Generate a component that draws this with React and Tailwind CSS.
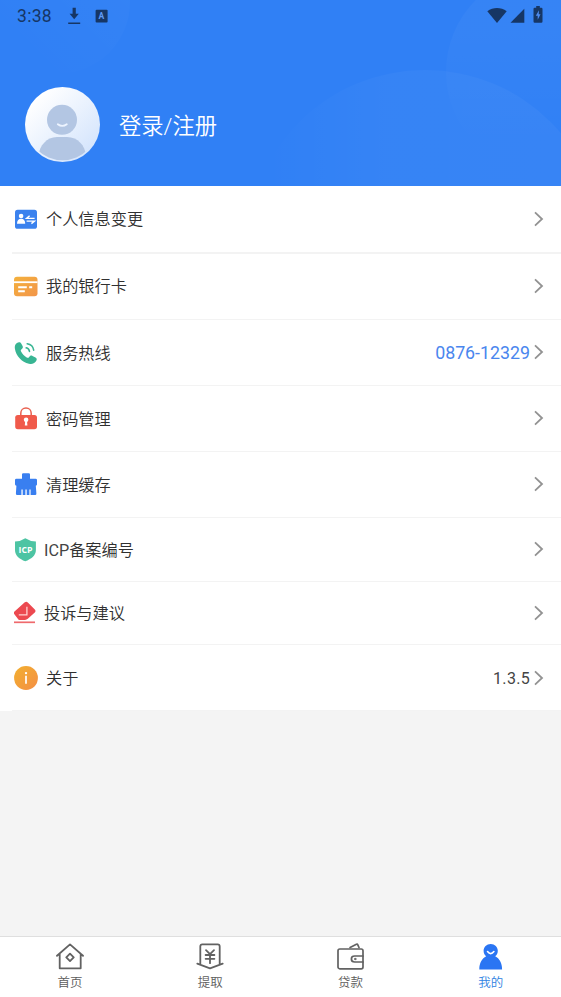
// src/pages/MinePage.jsx
import React from "react";

function ProfileIcon() {
  return (
    <svg width="24" height="24" viewBox="0 0 24 24">
      <rect x="1" y="2.8" width="22" height="19" rx="2.6" fill="#3b82ee" />
      <circle cx="7.1" cy="9" r="2.3" fill="#fff" />
      <path d="M3 16.700c0-3.400 1.600-5 4.100-5s4.100 1.600 4.100 5z" fill="#fff" />
      <path d="M20.600 11.400h-8l3-2.600M12.600 14.100h7.800l-3 2.500" fill="none" stroke="#fff" strokeWidth="1.4" />
    </svg>
  );
}

function CardIcon() {
  return (
    <svg width="24" height="24" viewBox="0 0 24 24">
      <defs>
        <linearGradient id="card" x1="0" y1="0" x2="1" y2="1">
          <stop offset="0" stopColor="#f4b13c" />
          <stop offset="1" stopColor="#f2954a" />
        </linearGradient>
      </defs>
      <rect x="0" y="2.8" width="23.5" height="19.4" rx="3" fill="url(#card)" />
      <path d="M0 8.200h23.500" stroke="#fff" strokeWidth="1.8" />
      <path d="M4.200 13.300h8.600M15.200 13.300h3M4.200 17.300h6.600" stroke="#fff" strokeWidth="1.9" />
    </svg>
  );
}

function PhoneIcon() {
  return (
    <svg width="24" height="24" viewBox="0 0 24 24">
      <path
        d="M2.600 2.200C4.600.7 6.400.9 7.200 2.400l1.500 2.900c.6 1.500-.2 2.300-1.400 3.200-.7.600-.7 1.200-.1 2.300 1.400 2.400 3.100 4.200 5.500 5.600 1.100.6 1.800.4 2.500-.5.900-1.200 1.900-1.700 3.300-1l3 1.600c1.600.9 1.700 2.200.3 4-1.600 2.100-3.900 3-6.800 2.200C7.600 21 2.100 14.900.9 7.700.5 5.300 1.100 3.400 2.600 2.200z"
        fill="#38b593"
      />
      <path d="M12.200 6.800c1.900.4 3 1.600 3.300 3.600M13.200 2.800c3.600.6 6 2.900 6.500 6.400" fill="none" stroke="#38b593" strokeWidth="1.6" strokeLinecap="round" />
    </svg>
  );
}

function LockIcon() {
  return (
    <svg width="24" height="24" viewBox="0 0 24 24">
      <path d="M6.800 9V6.200C6.800 3.300 9 1.100 12 1.100s5.200 2.200 5.200 5.100V9" fill="none" stroke="#e9604f" strokeWidth="1.5" />
      <rect x="1.2" y="8" width="21.8" height="14.2" rx="2.6" fill="#f05a4b" />
      <circle cx="12.1" cy="12.8" r="2.3" fill="#fff" />
      <path d="M11.200 13.500h1.800l.4 5h-2.600z" fill="#fff" />
    </svg>
  );
}

function BrushIcon() {
  return (
    <svg width="24" height="24" viewBox="0 0 24 24">
      <path
        d="M9.200.3h5.600q1.200 0 1.200 1.200v4.200h5.600q1.400 0 1.400 1.400v4.400q0 1-1.200 1.200l.6 7.700q.1 1.500-1.300 1.500h-4.500v-5.400h-1.200v5.400h-2.700v-5.400h-1.300v5.400H8.700v-5.400H7.400v5.400H3.200q-1.400 0-1.300-1.500l.5-7.700Q1 12.500 1 11.300V7.100Q1 5.700 2.400 5.700H8V1.500Q8 .3 9.200.3z"
        fill="#397ff0"
      />
    </svg>
  );
}

function IcpIcon() {
  return (
    <svg width="24" height="24" viewBox="0 0 24 24">
      <path d="M11.300.2Q16 3.300 21.900 3.600V12c0 5.600-4.700 9-10.600 11.300C5.400 21 1 17.600 1 12V3.600Q6.700 3.300 11.300.2z" fill="#4dc4a3" />
      <text x="11.6" y="14.5" textAnchor="middle" fontSize="8.2" fontWeight="700" fontFamily="Open Sans, sans-serif" fill="#fff" textLength="14" lengthAdjust="spacingAndGlyphs">
        ICP
      </text>
    </svg>
  );
}

function FeedbackIcon() {
  return (
    <svg width="24" height="24" viewBox="0 0 24 24">
      <path
        d="M10.800 1.300q1.600-1.300 3 .1l7 7.200q1.400 1.500 0 2.900l-7 6.300q-1.200 1.100-2.800 1.100H5.600q-1.200 0-1.600-1L-.1 12.700q-.5-1.300.6-2.300z"
        fill="#ec4950"
      />
      <path d="M12.900 5.700v8.100H4.800" fill="none" stroke="#ffd0cf" strokeWidth="1.3" />
      <path d="M0 21.300h21" stroke="#ef6a6d" strokeWidth="1.7" />
    </svg>
  );
}

function AboutIcon() {
  return (
    <svg width="24" height="24" viewBox="0 0 24 24">
      <defs>
        <linearGradient id="about" x1="0" y1="0" x2="1" y2="1">
          <stop offset="0" stopColor="#f2b02f" />
          <stop offset="1" stopColor="#f48e45" />
        </linearGradient>
      </defs>
      <circle cx="12" cy="12" r="11.9" fill="url(#about)" />
      <circle cx="12" cy="7.1" r="1.2" fill="#fff" />
      <path d="M12 9.700v8" stroke="#fff" strokeWidth="1.7" />
    </svg>
  );
}

function Chevron() {
  return (
    <svg width="10" height="16" viewBox="0 0 10 16" fill="none" stroke="#929292" strokeWidth="1.8">
      <path d="M1 1.400l7 6.600-7 6.600" />
    </svg>
  );
}

function HomeIcon() {
  return (
    <svg width="28" height="28" viewBox="0 0 28 28" fill="none" stroke="#626262" strokeWidth="1.8" strokeLinejoin="round" strokeLinecap="round">
      <path d="M1 12.800L14 1.400l13 11.400M3.700 10.600V25.300h21V10.600M14 10.700l3.700 3.700-3.700 3.700-3.700-3.700z" />
    </svg>
  );
}

function WithdrawIcon() {
  return (
    <svg width="28" height="28" viewBox="0 0 28 28" fill="none" stroke="#626262" strokeWidth="1.8" strokeLinejoin="round" strokeLinecap="round">
      <path d="M4.300 21V3.400q0-2 2-2h15.400q2 0 2 2V21M1.300 20.600L14 25.300l12.700-4.700" />
      <path d="M10 7.200l4 4 4-4M14 11.200v9M9.600 12h8.800M9.600 15.800h8.800" />
    </svg>
  );
}

function WalletIcon() {
  return (
    <svg width="28" height="28" viewBox="0 0 28 28" fill="none" stroke="#626262" strokeWidth="1.7" strokeLinejoin="round" strokeLinecap="round">
      <rect x="1" y="6" width="25" height="19.8" rx="1.8" />
      <path d="M13.100 4.500l6.300-3.200q1-.4 1.400.5l1.200 2.700M26 13h-8.300q-3.300 0-3.300 3t3.300 3H26" />
      <circle cx="18.2" cy="16" r=".8" fill="#626262" strokeWidth=".8" />
    </svg>
  );
}

function MineIcon() {
  return (
    <svg width="28" height="28" viewBox="0 0 28 28">
      <path
        d="M13.700.9c4.100 0 7.100 3 7.100 6.900 0 2.400-1 4.200-2.600 5.400 4.200 2.200 6.900 6.700 6.900 13.200H2.300c0-6.500 2.700-11 6.900-13.200-1.600-1.200-2.600-3-2.600-5.400C6.600 3.900 9.600.9 13.700.9z"
        fill="#2a75f3"
      />
      <path d="M10.500 8.600q3.200 4 6.400 0" fill="none" stroke="#fff" strokeWidth="1.6" strokeLinecap="round" />
    </svg>
  );
}

const rows = [
  { label: "个人信息变更", Icon: ProfileIcon, size: "h-[68px] border-b-2", gap: "gap-2", labelClass: "pt-0.5" },
  { label: "我的银行卡", Icon: CardIcon, size: "h-[66px] border-b pb-px", gap: "gap-2", labelClass: "pt-0.5" },
  { label: "服务热线", Icon: PhoneIcon, size: "h-[66px] border-b pb-px", gap: "gap-2", iconClass: "pt-0.5", labelClass: "pt-[3px]", value: "0876-12329", valueClass: "text-[17.8px] text-[#4a86ee]" },
  { label: "密码管理", Icon: LockIcon, size: "h-[66px] border-b pb-px", gap: "gap-2", iconClass: "pt-0.5", labelClass: "pt-[3px]" },
  { label: "清理缓存", Icon: BrushIcon, size: "h-[66px] border-b pb-px", gap: "gap-2", iconClass: "pt-0.5", labelClass: "pt-[3px]" },
  { prefix: "ICP", label: "备案编号", Icon: IcpIcon, size: "h-[64px] border-b pb-px", gap: "gap-[6px]", iconClass: "pt-0.5", labelClass: "pt-[3px]" },
  { label: "投诉与建议", Icon: FeedbackIcon, size: "h-[63px] border-b", gap: "gap-[6px]", labelClass: "pt-0.5" },
  { label: "关于", Icon: AboutIcon, size: "h-[66px] border-b", gap: "gap-2", labelClass: "pt-0.5", value: "1.3.5", valueClass: "text-[16px] tracking-[0.3px] text-[#444]" },
];

const tabs = [
  { label: "首页", Icon: HomeIcon },
  { label: "提取", Icon: WithdrawIcon },
  { label: "贷款", Icon: WalletIcon },
  { label: "我的", Icon: MineIcon, active: true },
];

function StatusBar() {
  return (
    <div className="relative flex h-8 items-center justify-between px-[17px] text-[#163665]">
      <div className="flex items-center">
        <span className="w-[50px] text-[17.5px] leading-8 tracking-[0.3px]">3:38</span>
        <svg className="-mt-px" width="14" height="18" viewBox="0 0 14 18" fill="currentColor">
          <path d="M5.600.8h3.200v6h3L7.200 12.200 2.600 6.800h3zM1.200 15.600h12v1.500h-12z" />
        </svg>
        <svg className="ml-[14px] -mt-px" width="13" height="14" viewBox="0 0 13 14">
          <rect x=".6" y=".8" width="12" height="12.6" rx="1" fill="currentColor" />
          <text x="6.3" y="10.3" textAnchor="middle" fontSize="8.5" fontWeight="700" fill="#5f9af5">A</text>
        </svg>
      </div>
      <div className="-mt-1 mr-px flex items-end">
        <svg width="20" height="16" viewBox="0 0 20 16" fill="currentColor">
          <path d="M.3 4.200C6.200-.1 13.800-.1 19.700 4.200L10 15.900z" />
        </svg>
        <svg className="ml-[3px]" width="15" height="15" viewBox="0 0 15 15" fill="currentColor">
          <path d="M14.300.8v14H.5z" />
        </svg>
        <svg className="ml-[8px]" width="10" height="17" viewBox="0 0 10 17">
          <path d="M3.200 0h3.600v1.700h1.500q1.200 0 1.200 1.200v12.600q0 1.200-1.200 1.200H1.700q-1.200 0-1.200-1.200V2.900q0-1.200 1.200-1.200h1.500z" fill="currentColor" />
          <path d="M6 4.200L2.800 9.700h1.900v4.100L7.500 8.300H5.700z" fill="#4e8df3" />
        </svg>
      </div>
    </div>
  );
}

export default function MinePage() {
  return (
    <div className="flex h-[997px] w-[561px] flex-col overflow-hidden bg-[#f4f4f4] font-['Roboto','Noto_Sans_CJK_SC',sans-serif]">
      {/* Header */}
      <header className="relative h-[186px] shrink-0 overflow-hidden bg-[#3080f5]">
        <svg className="absolute inset-0" width="561" height="186" viewBox="0 0 561 186">
          <defs>
            <linearGradient id="hill">
              <stop offset=".05" stopColor="#fff" stopOpacity="0" />
              <stop offset=".4" stopColor="#fff" stopOpacity=".03" />
              <stop offset="1" stopColor="#fff" stopOpacity=".035" />
            </linearGradient>
            <linearGradient id="bubble" x1="0" y1="1" x2="1" y2="0">
              <stop offset=".2" stopColor="#fff" stopOpacity="0" />
              <stop offset="1" stopColor="#fff" stopOpacity=".03" />
            </linearGradient>
            <linearGradient id="moon" x1="0" y1="0" x2="0" y2="1">
              <stop offset=".3" stopColor="#fff" stopOpacity=".03" />
              <stop offset=".85" stopColor="#fff" stopOpacity="0" />
            </linearGradient>
          </defs>
          <circle cx="58" cy="2" r="72" fill="url(#bubble)" />
          <circle cx="548" cy="72" r="102" fill="url(#moon)" />
          <circle cx="425" cy="248" r="178" fill="url(#hill)" />
        </svg>
        <StatusBar />
        <div className="relative mt-[55px] flex items-center gap-[19px] pl-[25px]">
          <svg width="75" height="75" viewBox="0 0 75 75">
            <defs>
              <linearGradient id="face" x1="0" y1="0" x2="1" y2="1">
                <stop offset=".15" stopColor="#fff" />
                <stop offset="1" stopColor="#cde0fc" />
              </linearGradient>
              <clipPath id="round">
                <circle cx="37.5" cy="37" r="36.2" />
              </clipPath>
            </defs>
            <circle cx="37.5" cy="37.5" r="37.5" fill="url(#face)" />
            <circle cx="37" cy="32.8" r="15" fill="#b3c6e3" />
            <path d="M32.800 37.200q4.500 3.400 9 0" fill="none" stroke="#edf4ff" strokeWidth="1.8" strokeLinecap="round" />
            <path d="M13.500 68c1-9 8-18 18.500-18h10c11 0 18 9 19 18v7h-47.500z" fill="#b3c6e3" clipPath="url(#round)" />
          </svg>
          <div className="pt-0.5 text-[22.3px] font-[350] leading-8 text-white">登录/注册</div>
        </div>
      </header>

      {/* Menu */}
      <main className="shrink-0 bg-white pl-3">
        {rows.map(({ prefix, label, Icon, size, gap, iconClass, labelClass, value, valueClass }) => (
          <div key={label} className={`flex items-center border-[#f3f3f3] pl-0.5 pr-[17px] ${size} ${gap}`}>
            <div className={iconClass}>
              <Icon />
            </div>
            <div className={`flex-1 text-[16.2px] font-[350] leading-6 text-[#303030] ${labelClass}`}>
              {prefix && <span className="font-normal text-[#444]">{prefix}</span>}
              {label}
            </div>
            <div className="flex items-center gap-1">
              {value && <span className={`pt-0.5 leading-6 ${valueClass}`}>{value}</span>}
              <Chevron />
            </div>
          </div>
        ))}
      </main>

      {/* Bottom tabs */}
      <nav className="mt-auto grid h-[61px] shrink-0 grid-cols-4 border-t border-[#dfdfdf] bg-white">
        {tabs.map(({ label, Icon, active }) => (
          <div key={label} className="flex flex-col items-center pt-[6px]">
            <Icon />
            <span className={`mt-[3px] text-[12.5px] font-[350] leading-[18px] ${active ? "text-[#2e82e2]" : "text-[#5c5c5c]"}`}>{label}</span>
          </div>
        ))}
      </nav>
    </div>
  );
}
